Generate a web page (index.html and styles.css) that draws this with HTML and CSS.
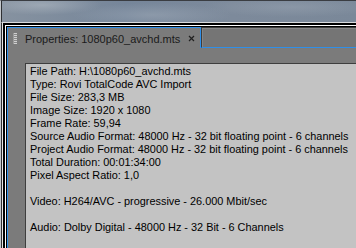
FILE: index.html
```html
<!DOCTYPE html>
<html lang="en">
<head>
  <meta charset="UTF-8">
  <title>Properties</title>
  <link rel="stylesheet" href="styles.css">
</head>
<body>
  <div class="screen">
    <div class="sky"></div>
    <div class="frame">
      <div class="frame-black">
        <div class="frame-white">
          <div class="frame-dark">
            <div class="tab-row">
              <div class="tab">
                <span class="grip"></span>
                <span class="tab-title">Properties: 1080p60_avchd.mts</span>
                <svg class="tab-close" width="7" height="7" viewBox="0 0 7 7">
                  <path d="M1 1 L6 6 M6 1 L1 6" stroke="#202020" stroke-width="1.2" fill="none"/>
                </svg>
              </div>
              <div class="tab-well"></div>
            </div>
            <div class="panel-body">
              <div class="info">
                <div>File Path: H:\1080p60_avchd.mts</div>
                <div>Type: Rovi TotalCode AVC Import</div>
                <div>File Size: 283,3 MB</div>
                <div>Image Size: 1920 x 1080</div>
                <div>Frame Rate: 59,94</div>
                <div>Source Audio Format: 48000 Hz - 32 bit floating point - 6 channels</div>
                <div>Project Audio Format: 48000 Hz - 32 bit floating point - 6 channels</div>
                <div>Total Duration: 00:01:34:00</div>
                <div>Pixel Aspect Ratio: 1,0</div>
                <div class="gap">Video: H264/AVC - progressive - 26.000 Mbit/sec</div>
                <div class="gap">Audio: Dolby Digital - 48000 Hz - 32 Bit - 6 Channels</div>
              </div>
            </div>
          </div>
        </div>
      </div>
    </div>
  </div>
</body>
</html>
```

FILE: styles.css
```css
html, body {
  margin: 0;
  padding: 0;
  height: 100%;
  overflow: hidden;
}
body {
  font-family: "Liberation Sans", Arial, sans-serif;
  font-size: 11px;
  color: #000;
  background: #7b8898;
}
.screen {
  height: 248px;
  box-sizing: border-box;
  border-top: 1px solid #3a3d42;
  border-left: 1px solid #c4c8cc;
  display: flex;
  flex-direction: column;
}
.sky {
  height: 21px;
  border-left: 1px solid #2e3033;
  background:
    radial-gradient(ellipse 60px 10px at 40px 4px, rgba(190, 198, 206, 0.45), transparent),
    radial-gradient(ellipse 80px 12px at 150px 14px, rgba(170, 180, 192, 0.4), transparent),
    radial-gradient(ellipse 90px 10px at 290px 6px, rgba(165, 176, 188, 0.35), transparent),
    linear-gradient(90deg, #8692a0 0%, #76869a 35%, #7d8a9b 65%, #7a8899 100%);
}
.frame {
  flex: 1;
  border-top: 1px solid #d8dadc;
  border-left: 1px solid #2e3033;
  display: flex;
}
.frame-black {
  flex: 1;
  border-left: 1px solid #e4e4e4;
  display: flex;
}
.frame-white {
  flex: 1;
  border-top: 2px solid #000;
  border-left: 2px solid #000;
  display: flex;
}
.frame-dark {
  flex: 1;
  border-top: 1px solid #fff;
  border-left: 1px solid #fff;
  box-shadow: inset 1px 1px 0 #000;
  padding: 1px 0 0 1px;
  display: flex;
  flex-direction: column;
}
.tab-row {
  display: flex;
  height: 21px;
}
.tab {
  flex: none;
  border: 1px solid #2f8fe8;
  border-bottom: none;
  background: #7b7b7b;
  display: flex;
  align-items: center;
  gap: 8px;
  padding: 1px 5px 0 5px;
}
.grip {
  flex: none;
  width: 3px;
  height: 11px;
  background: repeating-linear-gradient(180deg, #d0d0d0 0 1px, #8a8a8a 1px 2px);
  border-left: 1px solid #9a9a9a;
}
.tab-title {
  flex: none;
  color: #1a1a1a;
  font-size: 11px;
  white-space: nowrap;
}
.tab-close {
  flex: none;
  display: block;
}
.tab-well {
  flex: 1;
  border-bottom: 1px solid #2f8fe8;
  border-top: 1px solid #3c3c3c;
  border-left: 1px solid #3c3c3c;
  background: #757575;
  box-shadow: inset 1px 1px 0 #868686;
}
.panel-body {
  flex: 1;
  background: #7b7b7b;
  border-left: 1px solid #2f8fe8;
  padding: 15px 0 0 17px;
  display: flex;
}
.info {
  flex: 1;
  background: #c3c3c3;
  border-top: 1px solid #3e3e3e;
  border-left: 1px solid #3e3e3e;
  padding: 1px 0 0 4px;
  font-size: 10.9px;
  line-height: 13px;
  white-space: nowrap;
}
.gap {
  margin-top: 13px;
}
```
